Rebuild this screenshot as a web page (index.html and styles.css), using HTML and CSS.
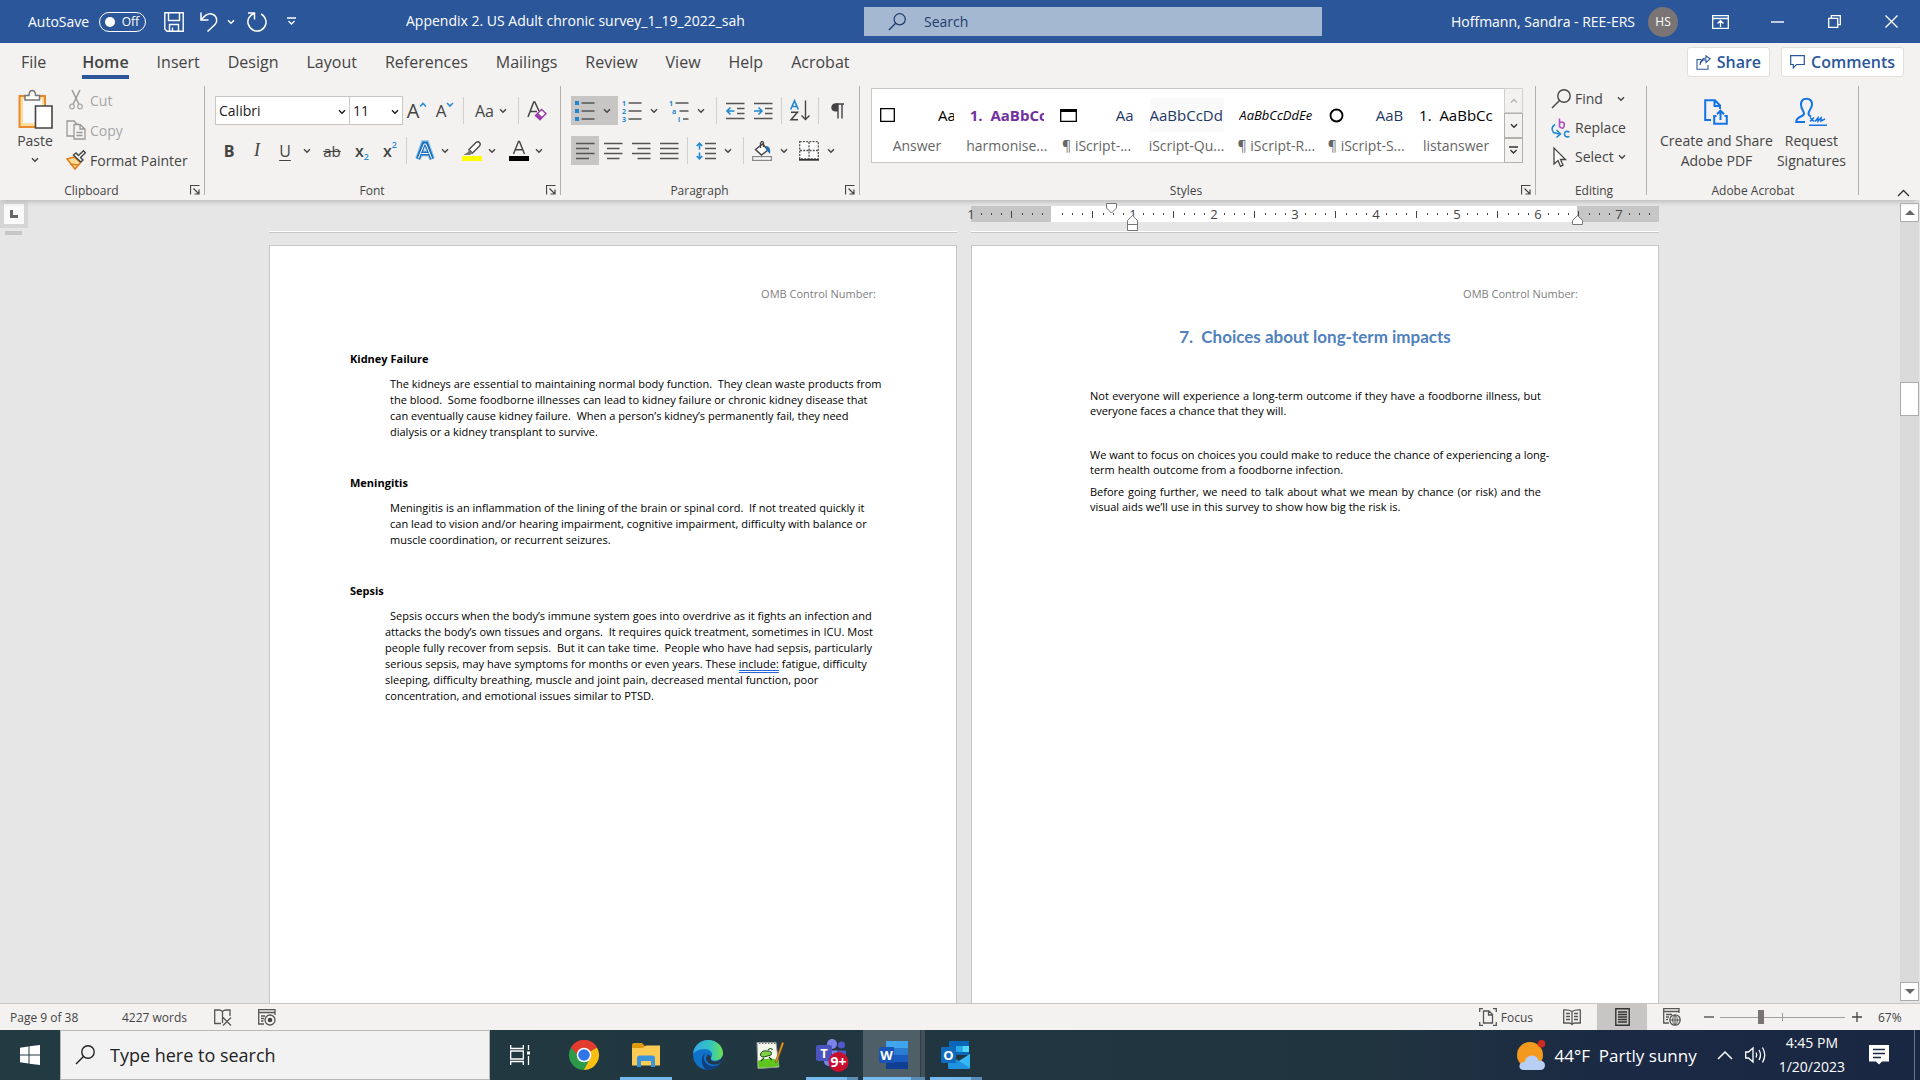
FILE: index.html
```html
<!DOCTYPE html>
<html lang="en">
<head>
    <meta charset="UTF-8">
    <meta name="viewport" content="width=device-width, initial-scale=1.0">
    <title>Appendix 2. US Adult chronic survey_1_19_2022_sah</title>
    <link rel="stylesheet" href="styles.css">
</head>
<body>
    <!-- Shared icon shapes -->
    <svg class="defs" aria-hidden="true">
        <symbol id="chev" viewBox="0 0 8 6"><path d="M1 1.2 4 4.3 7 1.2" fill="none" stroke="currentColor" stroke-width="1.4"/></symbol>
        <symbol id="launch" viewBox="0 0 10 10"><path d="M.5 9.500V.5H9.500M3.500 3.500 8.500 8.500M9 4.500V9H4.500" fill="none" stroke="currentColor" stroke-width="1.2"/></symbol>
        <symbol id="lens" viewBox="0 0 20 20"><circle cx="13" cy="7" r="6.200" fill="none" stroke="currentColor" stroke-width="1.4"/><path d="M8.500 11.500 1 19" stroke="currentColor" stroke-width="1.5"/></symbol>
    </svg>

    <header class="titlebar">
        <div class="quick">
            <span>AutoSave</span>
            <button class="toggle" aria-label="AutoSave"><i></i>Off</button>
            <button class="qbtn save" aria-label="Save"><svg width="20" height="20" viewBox="0 0 20 20"><path d="M.8.8H19.200V19.200H3L.8 17ZM4.500 1V8.500H15.500V1M5.500 19V12.500H14.500V19M8.500 19V15.500" fill="none" stroke="#fff" stroke-width="1.4"/></svg></button>
            <button class="qbtn undo" aria-label="Undo"><svg width="18" height="20" viewBox="0 0 18 20"><path d="M1 .5V8H8.500M1.300 7.700C5 3 9 .8 12.500 2.200 17 4 18 9 15 12.500L7.500 19.500" fill="none" stroke="#fff" stroke-width="1.5"/></svg></button>
            <svg class="chev"><use href="#chev"/></svg>
            <button class="qbtn redo" aria-label="Redo"><svg width="20" height="20" viewBox="0 0 20 20"><path d="M1 1H7.500V7.500M7 1.500C2 3.500 0 8 1.200 12 3 18 9 20.500 14 18.200 19 15.500 20.500 9.500 17.500 5.200 16.500 3.700 15.500 2.700 14 2" fill="none" stroke="#fff" stroke-width="1.5"/></svg></button>
            <button class="qbtn" aria-label="Customize"><svg width="9" height="9" viewBox="0 0 9 9"><path d="M0 1H9M1.500 4 4.500 7 7.500 4" fill="none" stroke="#fff" stroke-width="1.3"/></svg></button>
        </div>
        <div class="doc-title">Appendix 2. US Adult chronic survey_1_19_2022_sah</div>
        <label class="search">
            <svg width="18" height="18"><use href="#lens"/></svg>
            <input type="text" placeholder="Search" aria-label="Search">
        </label>
        <div class="account">
            <span>Hoffmann, Sandra - REE-ERS</span>
            <span class="avatar">HS</span>
        </div>
        <div class="window-buttons">
            <button aria-label="Ribbon display options"><svg width="17" height="14" viewBox="0 0 17 14"><path d="M.7.700H16.300V13.300H.7ZM.7 3.500H16.300M8.500 12V6M5.500 8.500 8.500 5.700 11.500 8.500" fill="none" stroke="#fff" stroke-width="1.3"/></svg></button>
            <button aria-label="Minimize"><svg width="13" height="13"><path d="M0 7H13" stroke="#fff" stroke-width="1.4"/></svg></button>
            <button aria-label="Restore"><svg width="13" height="13"><path d="M.7 3.300H9.700V12.300H.7ZM3.300 3V.7H12.300V9.700H10" fill="none" stroke="#fff" stroke-width="1.3"/></svg></button>
            <button aria-label="Close"><svg width="13" height="13"><path d="M.5.500 12.500 12.500M12.500.500.5 12.500" stroke="#fff" stroke-width="1.400"/></svg></button>
        </div>
    </header>

    <nav class="tabs">
        <a href="#">File</a>
        <a href="#" class="active">Home</a>
        <a href="#">Insert</a>
        <a href="#">Design</a>
        <a href="#">Layout</a>
        <a href="#">References</a>
        <a href="#">Mailings</a>
        <a href="#">Review</a>
        <a href="#">View</a>
        <a href="#">Help</a>
        <a href="#">Acrobat</a>
        <div class="tab-actions">
            <button><svg width="15" height="15" viewBox="0 0 15 15"><path d="M5 4.500H1V14.300H12V10M4 10C4.500 6.500 6.500 4.700 10 4.700V7.500L14.200 3.800 10 .8V3C7 3 4.500 5 4 10Z" fill="none" stroke="currentColor" stroke-width="1.1"/></svg>Share</button>
            <button><svg width="15" height="14" viewBox="0 0 15 14"><path d="M.7.700H14.300V9.500H6.500L3.300 12.800V9.500H.7Z" fill="none" stroke="currentColor" stroke-width="1.2"/></svg>Comments</button>
        </div>
    </nav>

    <section class="ribbon">
        <div class="group clipboard">
            <div class="clip-body">
                <button class="paste">
                    <svg width="36" height="40" viewBox="0 0 36 40"><path d="M2.500 7H28V38H2.500Z" fill="#fbdc9a" stroke="#e8892b" stroke-width="2"/><path d="M6 10H25V34H6Z" fill="#fafafa"/><path d="M8 11V6.500H12C12 3 13 1.500 15.200 1.500S18.500 3 18.500 6.500H22.500V11Z" fill="#fff" stroke="#777" stroke-width="1.500"/><path d="M18.500 17H35V39H18.500Z" fill="#fff" stroke="#444" stroke-width="1.600"/></svg>
                    <span>Paste</span>
                    <svg class="chev"><use href="#chev"/></svg>
                </button>
                <div class="clip-list">
                    <button class="off"><svg width="20" height="20" viewBox="0 0 20 20"><path d="M6 0 12.800 14M14 0 7.200 14" fill="none" stroke="#999" stroke-width="1.500"/><circle cx="6" cy="16.500" r="2.300" fill="none" stroke="#aaa" stroke-width="1.300"/><circle cx="14" cy="16.500" r="2.300" fill="none" stroke="#aaa" stroke-width="1.300"/></svg>Cut</button>
                    <button class="off"><svg width="20" height="20" viewBox="0 0 20 20"><path d="M8 16H1V1H8L11 4M8 4.500H14L19 9V19H8ZM14 4.500V9H19M10.500 12.500H16.500M10.500 15.500H16.500" fill="none" stroke="#999" stroke-width="1.300"/></svg>Copy</button>
                    <button><svg width="20" height="20" viewBox="0 0 20 20"><path d="M1 9 8 7 14.500 12.500 9 19Z" fill="#fbdc9a" stroke="#e07b1a" stroke-width="1.500"/><path d="M4 14 12 15" stroke="#e07b1a" stroke-width="1.500"/><path d="M7.500 5 10 3 12.500 5.500 17.500.800 19.300 2.800 14.500 7.500 17 10 14.800 12Z" fill="#fff" stroke="#444" stroke-width="1.400"/></svg>Format Painter</button>
                </div>
            </div>
            <div class="group-label">Clipboard</div>
            <button class="launcher" aria-label="Clipboard settings"><svg><use href="#launch"/></svg></button>
        </div>

        <div class="group font">
            <div class="tools">
                <span class="combo name"><select aria-label="Font"><option>Calibri</option></select><svg class="chev"><use href="#chev"/></svg></span>
                <span class="combo size"><select aria-label="Font size"><option>11</option></select><svg class="chev"><use href="#chev"/></svg></span>
                <button class="tool grow" aria-label="Grow font">A<svg class="chev"><path d="M1 4.500 4 1.500 7 4.500" fill="none" stroke="#2a8dd4" stroke-width="1.600"/></svg></button>
                <button class="tool shrink" aria-label="Shrink font">A<svg class="chev"><path d="M1 1 4 4 7 1" fill="none" stroke="#2a8dd4" stroke-width="1.600"/></svg></button>
                <span class="sep"></span>
                <button class="tool case">Aa<svg class="chev"><use href="#chev"/></svg></button>
                <span class="sep"></span>
                <button class="tool" aria-label="Clear formatting"><svg width="20" height="20" viewBox="0 0 20 20"><path d="M1 16 6.700 1H7.800L12 10M3 10.500H10" fill="none" stroke="#444" stroke-width="1.500"/><path d="M8.500 14.500 14.500 8.500 19 12.500 13 18.800Z" fill="#fff" stroke="#9b3fa8" stroke-width="1.500"/><path d="M8.500 14.500 11 12 15.500 16.200 13 18.800Z" fill="#9b3fa8"/></svg></button>
            </div>
            <div class="tools">
                <button class="tool bold">B</button>
                <button class="tool italic">I</button>
                <button class="tool split"><span class="under">U</span><svg class="chev"><use href="#chev"/></svg></button>
                <button class="tool strike">ab</button>
                <button class="tool script">x<sub>2</sub></button>
                <button class="tool script">x<sup>2</sup></button>
                <span class="sep"></span>
                <button class="tool split" aria-label="Text effects"><svg width="20" height="20" viewBox="0 0 20 20"><path d="M3 18 8.500 2H11.500L17 18M6.500 12.500H13.500" fill="none" stroke="#9ccbee" stroke-width="6"/><path d="M3 18 8.700 2.500H11.300L17 18M6.500 12.500H13.500" fill="none" stroke="#1f6fbd" stroke-width="4"/><path d="M3.300 17.500 9.200 3H10.800L16.700 17.500M6.500 12.500H13.500" fill="none" stroke="#fff" stroke-width="1"/></svg><svg class="chev"><use href="#chev"/></svg></button>
                <button class="tool split" aria-label="Highlight"><svg width="20" height="20" viewBox="0 0 20 20"><path d="M7 8.500 14 1.500Q16 0 17.500 1.500T17.500 5L10.500 12Z" fill="#fff" stroke="#444" stroke-width="1.300"/><path d="M7 8 11 12 8 14H1.500L6 11Z" fill="#777"/><path d="M0 15H20V20H0Z" fill="#ff0"/></svg><svg class="chev"><use href="#chev"/></svg></button>
                <button class="tool split" aria-label="Font color"><svg width="20" height="20" viewBox="0 0 20 20"><path d="M4.500 13 9.500.500H10.500L15.500 13M6.500 8.800H13.500" fill="none" stroke="#444" stroke-width="1.400"/><path d="M0 15H20V20H0Z"/></svg><svg class="chev"><use href="#chev"/></svg></button>
            </div>
            <div class="group-label">Font</div>
            <button class="launcher" aria-label="Font settings"><svg><use href="#launch"/></svg></button>
        </div>

        <div class="group paragraph">
            <div class="tools">
                <button class="tool split on" aria-label="Bullets"><svg width="20" height="20" viewBox="0 0 20 20"><path d="M0 0H4V4H0ZM0 8H4V12H0ZM0 16H4V20H0Z" fill="#1e88d2"/><path d="M6.500 2H19.500M6.500 10H19.500M6.500 18H19.500" stroke="#555" stroke-width="1.500"/></svg><svg class="chev"><use href="#chev"/></svg></button>
                <button class="tool split" aria-label="Numbering"><svg width="20" height="20" viewBox="0 0 20 20"><g class="num"><text x="0" y="5">1</text><text x="0" y="13">2</text><text x="0" y="21">3</text></g><path d="M6.500 2H19.500M6.500 10H19.500M6.500 18H19.500" stroke="#555" stroke-width="1.500"/></svg><svg class="chev"><use href="#chev"/></svg></button>
                <button class="tool split" aria-label="Multilevel list"><svg width="20" height="20" viewBox="0 0 20 20"><g class="num"><text x="0" y="5">1</text><text x="3" y="13">a</text><text x="9" y="21">i</text></g><path d="M6.500 2H19.500M10.500 10H19.500M14 18H19.500" stroke="#555" stroke-width="1.500"/></svg><svg class="chev"><use href="#chev"/></svg></button>
                <span class="sep"></span>
                <button class="tool" aria-label="Decrease indent"><svg width="19" height="18" viewBox="0 0 19 18"><path d="M0 1.500H18.500M11 6.500H18.500M11 11.500H18.500M0 16.500H18.500" stroke="#555" stroke-width="1.500"/><path d="M8.500 9H1.500M4.500 5.500 1 9 4.500 12.500" fill="none" stroke="#1e88d2" stroke-width="1.600"/></svg></button>
                <button class="tool" aria-label="Increase indent"><svg width="19" height="18" viewBox="0 0 19 18"><path d="M0 1.500H18.500M11 6.500H18.500M11 11.500H18.500M0 16.500H18.500" stroke="#555" stroke-width="1.500"/><path d="M0 9H7.500M4.500 5.500 8 9 4.500 12.500" fill="none" stroke="#1e88d2" stroke-width="1.600"/></svg></button>
                <span class="sep"></span>
                <button class="tool" aria-label="Sort"><svg width="20" height="21" viewBox="0 0 20 21"><path d="M.7 9.500 4.500.700 8.300 9.500M2 6.500H7" fill="none" stroke="#1e88d2" stroke-width="1.600"/><path d="M1 12.200H7.500L1 19.800H8" fill="none" stroke="#444" stroke-width="1.500"/><path d="M15.500.500V19.500M11.500 15.500 15.500 19.500 19.500 15.500" fill="none" stroke="#444" stroke-width="1.400"/></svg></button>
                <span class="sep"></span>
                <button class="tool" aria-label="Show marks"><svg width="13" height="16" viewBox="0 0 13 16"><path d="M13 1H5M7 15.500V1M11 15.500V1" fill="none" stroke="#444" stroke-width="1.400"/><path d="M7 .3H5Q.3.500.3 4.500T5 8.500H7Z" fill="#444"/></svg></button>
            </div>
            <div class="tools">
                <button class="tool on" aria-label="Align left"><svg width="19" height="18"><path d="M0 1.500H18.500M0 6.500H13M0 11.500H18.500M0 16.500H13" stroke="#555" stroke-width="1.500"/></svg></button>
                <button class="tool" aria-label="Center"><svg width="19" height="18"><path d="M0 1.500H18.500M3 6.500H15.500M0 11.500H18.500M3 16.500H15.500" stroke="#555" stroke-width="1.500"/></svg></button>
                <button class="tool" aria-label="Align right"><svg width="19" height="18"><path d="M0 1.500H18.500M5.500 6.500H18.500M0 11.500H18.500M5.500 16.500H18.500" stroke="#555" stroke-width="1.500"/></svg></button>
                <button class="tool" aria-label="Justify"><svg width="19" height="18"><path d="M0 1.500H18.500M0 6.500H18.500M0 11.500H18.500M0 16.500H18.500" stroke="#555" stroke-width="1.500"/></svg></button>
                <span class="sep"></span>
                <button class="tool split" aria-label="Line spacing"><svg width="20" height="18" viewBox="0 0 20 18"><path d="M9 1.500H20M9 6.500H20M9 11.500H20M9 16.500H20" stroke="#555" stroke-width="1.500"/><path d="M3.500 1V7.500M3.500 10.500V17M.7 4 3.500 1.200 6.300 4M.7 14 3.500 16.800 6.300 14" fill="none" stroke="#1e88d2" stroke-width="1.600"/></svg><svg class="chev"><use href="#chev"/></svg></button>
                <span class="sep"></span>
                <button class="tool split" aria-label="Shading"><svg width="20" height="20" viewBox="0 0 20 20"><path d="M3.500 8.500 10.500 3 16 9 9.500 14Z" fill="#fff" stroke="#444" stroke-width="1.500"/><path d="M8.500 7V2Q10.500-1 11.500 2V6" fill="none" stroke="#444" stroke-width="1.300"/><path d="M14 5Q19 5 18 13L14.500 9Z" fill="#1e6fb8"/><path d="M.7 15.700H19.300V19.300H.7Z" fill="#fff" stroke="#888" stroke-width="1.200"/></svg><svg class="chev"><use href="#chev"/></svg></button>
                <button class="tool split" aria-label="Borders"><svg width="20" height="20" viewBox="0 0 20 20"><path d="M.7.700H19.300V18H.7ZM10 1V18M1 9.500H19" fill="#fff" stroke="#555" stroke-width="1.300" stroke-dasharray="2 1.200"/><path d="M0 18.800H20" stroke="#333" stroke-width="1.800"/></svg><svg class="chev"><use href="#chev"/></svg></button>
            </div>
            <div class="group-label">Paragraph</div>
            <button class="launcher" aria-label="Paragraph settings"><svg><use href="#launch"/></svg></button>
        </div>

        <div class="group styles">
            <div class="gallery">
                <button class="style answer"><span class="sample"><svg width="15" height="14"><path d="M.7.700H14.300V13.300H.7Z" fill="#fff" stroke="#000" stroke-width="1.300"/></svg><b>Aa</b></span><span>Answer</span></button>
                <button class="style harm"><span class="sample">1.&nbsp; AaBbCc</span><span>harmonise...</span></button>
                <button class="style"><span class="sample"><svg width="17" height="13"><path d="M.7.700H16.300V12.300H.7Z" fill="#fff" stroke="#000" stroke-width="1.300"/><path d="M0 0H17V3H0Z"/></svg><b>Aa</b></span><span>¶ iScript-...</span></button>
                <button class="style"><span class="sample quest">AaBbCcDd</span><span>iScript-Qu...</span></button>
                <button class="style"><span class="sample resp">AaBbCcDdEe</span><span>¶ iScript-R...</span></button>
                <button class="style"><span class="sample"><svg width="15" height="15"><circle cx="7.500" cy="7.500" r="6" fill="#fff" stroke="#000" stroke-width="1.800"/></svg><b>AaB</b></span><span>¶ iScript-S...</span></button>
                <button class="style answer"><span class="sample">1.&nbsp; AaBbCc</span><span>listanswer</span></button>
                <div class="gallery-nav">
                    <button class="off" aria-label="Up"><svg class="chev"><path d="M1 4.500 4 1.500 7 4.500" fill="none" stroke="currentColor" stroke-width="1.300"/></svg></button>
                    <button aria-label="Down"><svg class="chev"><use href="#chev"/></svg></button>
                    <button aria-label="More"><svg width="9" height="9"><path d="M0 1H9M1.500 4 4.500 7 7.500 4" fill="none" stroke="#333" stroke-width="1.400"/></svg></button>
                </div>
            </div>
            <div class="group-label">Styles</div>
            <button class="launcher" aria-label="Styles settings"><svg><use href="#launch"/></svg></button>
        </div>

        <div class="group editing">
            <div class="edit-list">
                <button><svg width="20" height="20"><use href="#lens"/></svg>Find<svg class="chev far"><use href="#chev"/></svg></button>
                <button><svg width="20" height="20" viewBox="0 0 20 20"><g fill="none" stroke-width="1.600"><path d="M8.500.500V9.500M8.500 5Q10 3.500 12 4.300T13 8.500 8.500 8.500" stroke="#b24fc0"/><path d="M18.500 14Q13.500 12 13.500 16T18.500 18.500" stroke="#1e88d2"/><path d="M4 6.500Q-1 10 2.500 14.500L8 16M5.500 12 9.500 16 5.500 19.500" stroke="#1e88d2"/></g></svg>Replace</button>
                <button><svg width="20" height="20" viewBox="0 0 20 20"><path d="M3 1V17L7 13.500 9.500 19.300 12 18.200 9.500 12.500H14.500Z" fill="#fff" stroke="#444" stroke-width="1.300"/></svg>Select<svg class="chev"><use href="#chev"/></svg></button>
            </div>
            <div class="group-label">Editing</div>
        </div>

        <div class="group acrobat">
            <div class="acro-list">
                <button><svg width="24" height="26" viewBox="0 0 24 26"><path d="M7 21H1.200V1.200H11L16 6.500V10M10.500 1.500V7H16M12.500 17H10.200V24.800H22.800V17H20.500M16.500 21V12M13 15.200 16.500 11.700 20 15.200" fill="none" stroke="#1473e6" stroke-width="2"/></svg><span>Create and Share<br>Adobe PDF</span></button>
                <button><svg width="32" height="29" viewBox="0 0 32 29"><path d="M10 24.500H1.200C1.200 18 9 20 9 16 9 13.500 6 12 6 7 6 3 8.500 1.200 11.500 1.200S17 3 17 7C17 11 13.500 12.500 13.500 16.500 13.500 18 15 18.500 16 19" fill="none" stroke="#1473e6" stroke-width="2"/><path d="M15 20 19 24M19 20 15 24M20 24 23 20.500V23.500L26 20.500V23.500L30 21.500M14 27.800H32" fill="none" stroke="#1473e6" stroke-width="1.600"/></svg><span>Request<br>Signatures</span></button>
            </div>
            <div class="group-label">Adobe Acrobat</div>
        </div>
        <button class="collapse" aria-label="Collapse ribbon"><svg width="13" height="8"><path d="M1 7 6.500 1.500 12 7" fill="none" stroke="#333" stroke-width="1.400"/></svg></button>
    </section>

    <main class="workspace">
        <div class="side">
            <button class="tab-stop" aria-label="Tab stop"><svg width="8" height="8"><path d="M1.500 0V6.500H8" fill="none" stroke="#666" stroke-width="3"/></svg></button>
            <div class="side-mark"></div>
        </div>
        <div class="pages">
            <svg class="ruler" width="688" height="16">
                <defs><pattern id="ticks" width="81" height="16" patternUnits="userSpaceOnUse"><path d="M10 8h1M20 8h1M30 8h1M51 8h1M61 8h1M71 8h1" stroke="#444" stroke-width="2"/><path d="M40.500 5V12" stroke="#444"/></pattern></defs>
                <rect width="688" height="16" fill="#c6c6c6"/>
                <rect x="80" width="526" height="16" fill="#fff"/>
                <rect width="688" height="16" fill="url(#ticks)"/>
                <g class="inches"><text x="0" y="13">1</text><text x="162" y="13">1</text><text x="243" y="13">2</text><text x="324" y="13">3</text><text x="405" y="13">4</text><text x="486" y="13">5</text><text x="567" y="13">6</text><text x="648" y="13">7</text></g>
                <g fill="#fff" stroke="#777"><path d="M135.500-2.500H145.500V2L140.500 7 135.500 2ZM156.500 14.500 161.500 9.500 166.500 14.500V24.500H156.500ZM156.500 18.500H166.500M601.500 18.500V14.500L606.500 9.500 611.500 14.500V18.500Z"/></g>
            </svg>
            <div class="prev-page"></div>
            <div class="prev-page"></div>

            <article class="page">
                <div class="page-header">OMB Control Number:</div>
                <h3>Kidney Failure</h3>
                <p>The kidneys are essential to maintaining normal body function.&nbsp; They clean waste products from<br>the blood.&nbsp; Some foodborne illnesses can lead to kidney failure or chronic kidney disease that<br>can eventually cause kidney failure.&nbsp; When a person’s kidney’s permanently fail, they need<br>dialysis or a kidney transplant to survive.</p>
                <h3>Meningitis</h3>
                <p>Meningitis is an inflammation of the lining of the brain or spinal cord.&nbsp; If not treated quickly it<br>can lead to vision and/or hearing impairment, cognitive impairment, difficulty with balance or<br>muscle coordination, or recurrent seizures.</p>
                <h3>Sepsis</h3>
                <p class="sepsis">Sepsis occurs when the body’s immune system goes into overdrive as it fights an infection and<br>attacks the body’s own tissues and organs.&nbsp; It requires quick treatment, sometimes in ICU. Most<br>people fully recover from sepsis.&nbsp; But it can take time.&nbsp; People who have had sepsis, particularly<br>serious sepsis, may have symptoms for months or even years. These <span class="grammar">include:</span> fatigue, difficulty<br>sleeping, difficulty breathing, muscle and joint pain, decreased mental function, poor<br>concentration, and emotional issues similar to PTSD.</p>
            </article>

            <article class="page choices">
                <div class="page-header">OMB Control Number:</div>
                <h2>7.&nbsp; Choices about long-term impacts</h2>
                <p>Not everyone will experience a long-term outcome if they have a foodborne illness, but everyone faces a chance that they will.</p>
                <p class="focus-text">We want to focus on choices you could make to reduce the chance of experiencing a long-<br>term health outcome from a foodborne infection.</p>
                <p>Before going further, we need to talk about what we mean by chance (or risk) and the visual&nbsp;aids we’ll use in this survey to show how big the risk is.</p>
            </article>
        </div>
        <div class="scrollbar">
            <button aria-label="Scroll up"><svg width="10" height="5"><path d="M0 5 5 0 10 5Z" fill="#666"/></svg></button>
            <div class="track"><div class="thumb"></div></div>
            <button aria-label="Scroll down"><svg width="10" height="5"><path d="M0 0H10L5 5Z" fill="#666"/></svg></button>
        </div>
    </main>

    <footer class="status">
        <span class="page-no">Page 9 of 38</span>
        <span class="words">4227 words</span>
        <svg class="proof" width="18" height="17" viewBox="0 0 18 17"><path d="M8.500 2.500V14M8.500 2.500Q7 1 5 1H.7V14.500H7M8.500 2.500Q10 1 12 1H16V7M9 8.500 17 16.500M17 8.500 9 16.500" fill="none" stroke="#555" stroke-width="1.300"/></svg>
        <svg width="18" height="17" viewBox="0 0 18 17"><path d="M6 15H.7V.700H17V6M.7 3.500H17M3 7H7M3 9.500H6M3 12H5.500" fill="none" stroke="#555" stroke-width="1.300"/><circle cx="12" cy="11" r="5" fill="none" stroke="#555" stroke-width="1.300"/><circle cx="12" cy="11" r="2.300" fill="#444"/></svg>
        <div class="views">
            <button class="focus"><svg width="18" height="18" viewBox="0 0 18 18"><path d="M.7 4V.700H4M14 .7H17.300V4M17.300 14V17.300H14M4 17.300H.7V14M4.500 3H10L13.500 6.500V15H4.500ZM9.500 3V7H13.500" fill="none" stroke="#555" stroke-width="1.300"/></svg>Focus</button>
            <button class="view" aria-label="Read mode"><svg width="18" height="17" viewBox="0 0 18 17"><path d="M9 2.500Q6 .7.700 1V14H6Q8 14 9 15.500 10 14 12 14H17.300V1Q12 .7 9 2.500ZM9 2.500V16M3 4.500H7M3 7.500H7M3 10.500H7M11 4.500H15M11 7.500H15M11 10.500H15" fill="none" stroke="#555" stroke-width="1.300"/></svg></button>
            <button class="view on" aria-label="Print layout"><svg width="15" height="18" viewBox="0 0 15 18"><path d="M.8.800H14.200V17.200H.8ZM3 4H12M3 6.500H12M3 9H12M3 11.500H12M3 14H12" fill="none" stroke="#333" stroke-width="1.400"/></svg></button>
            <button class="view" aria-label="Web layout"><svg width="18" height="18" viewBox="0 0 18 18"><path d="M6 15H.7V.700H16V5M.7 3.500H16M3 6.500H9M3 9H6M3 11.500H5" fill="none" stroke="#555" stroke-width="1.300"/><circle cx="12" cy="12" r="5.200" fill="none" stroke="#555" stroke-width="1.300"/><path d="M7 12H17M12 7V17M12 7Q7 12 12 17M12 7Q17 12 12 17" fill="none" stroke="#555"/></svg></button>
            <button class="zoom-btn" aria-label="Zoom out"><svg width="10" height="10"><path d="M0 5H10" stroke="#444" stroke-width="1.300"/></svg></button>
            <input type="range" min="0" max="100" value="32" aria-label="Zoom">
            <button class="zoom-btn" aria-label="Zoom in"><svg width="10" height="10"><path d="M0 5H10M5 0V10" stroke="#444" stroke-width="1.300"/></svg></button>
            <span class="percent">67%</span>
        </div>
    </footer>

    <div class="taskbar">
        <button class="start" aria-label="Start"><svg width="20" height="20" viewBox="0 0 20 20"><path d="M0 2.800 8.500 1.500V9.500H0ZM9.500 1.300 20 0V9.500H9.500ZM0 10.500H8.500V18.500L0 17.200ZM9.500 10.500H20V20L9.500 18.700Z" fill="#fff"/></svg></button>
        <label class="task-search">
            <svg width="20" height="20"><use href="#lens"/></svg>
            <input type="text" placeholder="Type here to search" aria-label="Type here to search">
        </label>
        <button class="start" aria-label="Task view"><svg width="20" height="20" viewBox="0 0 20 20"><path d="M.7 0V3.500H13.300V0M.7 6H13.300V14H.7ZM.7 20V16.500H13.300V20M18.500 0V5M18.500 11V20" fill="none" stroke="#fff" stroke-width="1.300"/><path d="M17 6.500H20V9.500H17Z" fill="#fff"/></svg></button>
        <div class="apps">
            <button aria-label="Chrome"><svg width="30" height="30" viewBox="0 0 30 30"><path d="M15 15 2 7.500A15 15 0 0 1 28 7.500Z" fill="#e33b2e"/><path d="M15 15 28 7.500A15 15 0 0 1 15 30Z" fill="#fbbf12"/><path d="M2 7.500 15 15 21 18.500 15 30A15 15 0 0 1 2 7.500Z" fill="#2c9a48"/><path d="M15 8H28.300A15 15 0 0 0 2 7.500L8.500 15Z" fill="#e33b2e"/><circle cx="15" cy="15" r="7.300" fill="#fff"/><circle cx="15" cy="15" r="5.800" fill="#2f76e8"/></svg></button>
            <button class="running" aria-label="File Explorer"><svg width="28" height="24" viewBox="0 0 28 24"><path d="M0 2Q0 0 2 0H10L13 3H27V8H0Z" fill="#dd9a0c"/><path d="M0 5H11L14 2.500H28V22.500H0Z" fill="#fccb54"/><path d="M5 24V15Q5 12.500 7.500 12.500H20.500Q23 12.500 23 15V24H19V18H9V24Z" fill="#3a95dc"/></svg></button>
            <button aria-label="Edge"><svg width="30" height="30" viewBox="0 0 30 30"><defs><linearGradient id="e1" x1="0" x2="1"><stop offset="0" stop-color="#32a9e8"/><stop offset=".6" stop-color="#34c6bd"/><stop offset="1" stop-color="#6fe04c"/></linearGradient></defs><circle cx="15" cy="15" r="15" fill="#0f72c9"/><path d="M12 13C9 20 13 26 20 26 24 26 27 24 28.500 22 26 27 21 30 15.500 30 8 29 7 17 12 13Z" fill="#123f7e"/><path d="M30 14C29 21 22 23 18.500 20.500 17 19 17.800 18 18.500 17L15 14 13 18C13 24 22 27 28.500 22L31 24V14Z" fill="#22384a"/><path d="M0 14C1 5 8 0 15 0 24 0 30 6.500 30 13 30 18 26 20.500 21.500 20.500 18 20.500 17.500 18.500 18.500 17 20.500 13 17 9 12 9 6 9 1 12 0 14Z" fill="url(#e1)"/></svg></button>
            <button aria-label="Notepad++"><svg width="28" height="28" viewBox="0 0 28 28"><path d="M1 1.500H20L23 26 2 27.500Z" fill="#f4f6ee" stroke="#999"/><path d="M2 20Q10 16 22.300 19L22.700 25.500 2.500 27Z" fill="#5fc51f"/><path d="M4.500 13Q6 9 11 10 17 10 15 14L8 16Q4 16 4.500 13" fill="#7fd04a" stroke="#1f4a16"/><path d="M8 17 5 20M13 16 16 19M12 9Q15 6 16.500 9" fill="none" stroke="#1f4a16" stroke-width="1.200"/><path d="M3 2.500H20" stroke="#777" stroke-dasharray="1.500 1.500"/><path d="M26 1 28 2 21 21 19.500 22 19.500 20Z" fill="#e49a24" stroke="#7a4a10" stroke-width=".6"/></svg></button>
            <button class="running multi" aria-label="Teams"><svg width="32" height="32" viewBox="0 0 32 32"><circle cx="16" cy="5" r="5" fill="#7b83eb"/><circle cx="25.500" cy="6" r="3.500" fill="#5059c9"/><path d="M20 11.500H30V20H20Z" fill="#5059c9"/><path d="M8 11.500H21V22Q20 27 14 27T8 22Z" fill="#7b83eb"/><rect y="6" width="16" height="16" rx="2" fill="#4b53bc"/><text class="logo" x="8" y="18.500">T</text><circle cx="22.500" cy="23" r="10" fill="#c8102e"/><text class="logo badge" x="22.500" y="28">9+</text></svg></button>
            <button class="running multi current" aria-label="Word"><svg width="30" height="28" viewBox="0 0 30 28"><path d="M7 0H29V7H7Z" fill="#41a5ee"/><path d="M7 7H29V14H7Z" fill="#2b7cd3"/><path d="M7 14H29V21H7Z" fill="#185abd"/><path d="M7 21H29V28H7Z" fill="#103f91"/><rect y="6" width="15" height="16" rx="1" fill="#1a55b5"/><text class="logo" x="7.500" y="18.500">W</text></svg></button>
            <button class="running multi" aria-label="Outlook"><svg width="30" height="28" viewBox="0 0 30 28"><path d="M8 0H28V14H8Z" fill="#0a66b8"/><path d="M15 5H21.500V11H15Z" fill="#28a8ea"/><path d="M21.500 5H28V11H21.500Z" fill="#50d9ff"/><path d="M7 13 18 20 29 13V27Q29 28 28 28H8Q7 28 7 27Z" fill="#1f93e0"/><path d="M29 13V27L18 20Z" fill="#35b8f1"/><rect y="6" width="15" height="16" rx="1" fill="#0f6cbd"/><text class="logo" x="7.500" y="18.500">O</text></svg></button>
        </div>
        <div class="tray">
            <svg width="30" height="30" viewBox="0 0 30 30"><circle cx="13" cy="15" r="13" fill="#f39a1e"/><circle cx="24.500" cy="3.800" r="3.800" fill="#cf2a1f"/><path d="M7 30Q2 30 2.500 25.500 3 22 7.500 22 9 15.500 15 15.500 20 15.500 21.500 20.500 28 20.500 28 25.500 27.500 30 23 30Z" fill="#b7cff5"/></svg>
            <span class="weather">44°F&nbsp; Partly sunny</span>
            <svg class="up" width="16" height="10"><path d="M1 9 8 2 15 9" fill="none" stroke="#fff" stroke-width="1.500"/></svg>
            <svg class="sound" width="22" height="18" viewBox="0 0 22 18"><path d="M.7 6H3.500L8 2V16L3.500 12H.7ZM11 6.500Q12.500 9 11 11.500M14 4Q17 9 14 14M17.500 1.500Q22 9 17.500 16.500" fill="none" stroke="#fff" stroke-width="1.300"/></svg>
            <div class="clock">4:45 PM<br>1/20/2023</div>
            <svg class="notes" width="20" height="20" viewBox="0 0 20 20"><path d="M0 0H20V16.500H13L10 19.500 7 16.500H0Z" fill="#fff"/><path d="M4 4.500H16M4 8.500H16M4 12.500H12" stroke="#1b2942" stroke-width="1.300"/></svg>
        </div>
    </div>
</body>
</html>
```

FILE: styles.css
```css
* {
    box-sizing: border-box;
}
body {
    margin: 0;
    height: 100vh;
    display: flex;
    flex-direction: column;
    overflow: hidden;
    font-family: "Open Sans", "Noto Sans", sans-serif;
    font-size: 14px;
    color: #444;
    background-color: #e6e6e6;
}
button, input, select {
    font: inherit;
    color: inherit;
    background: none;
    border: 0;
    padding: 0;
    margin: 0;
}
svg {
    flex: none;
    overflow: visible;
}
.defs {
    display: none;
}
.chev {
    width: 8px;
    height: 6px;
}

/* Title bar */
.titlebar {
    display: flex;
    align-items: center;
    height: 43px;
    flex: none;
    background-color: #2b579a;
    color: #fff;
}
.quick {
    display: flex;
    align-items: center;
    width: 378px;
    padding-left: 28px;
}
.toggle {
    display: flex;
    align-items: center;
    justify-content: space-between;
    width: 47px;
    height: 20px;
    margin: 0 18px 0 10px;
    padding: 0 6px 0 5px;
    border: 1px solid #fff;
    border-radius: 10px;
    font-size: 12px;
}
.toggle i {
    width: 10px;
    height: 10px;
    border-radius: 50%;
    background-color: #fff;
}
.qbtn {
    display: flex;
}
.save {
    margin-right: 16px;
}
.undo {
    margin-right: 9px;
}
.redo {
    margin: 0 20px 0 12px;
}
.doc-title {
    flex: 1;
    padding: 0 0 2px 28px;
}
.search {
    display: flex;
    align-items: center;
    gap: 18px;
    width: 458px;
    height: 29px;
    padding-left: 24px;
    background-color: #a5b8d1;
    color: #1e3d6e;
}
.search input {
    flex: 1;
}
.search input::placeholder,
.task-search input::placeholder {
    color: inherit;
    opacity: 1;
}
.account {
    display: flex;
    align-items: center;
    justify-content: flex-end;
    gap: 13px;
    width: 356px;
}
.avatar {
    width: 30px;
    height: 30px;
    border-radius: 50%;
    background-color: #7a7574;
    font-size: 12px;
    line-height: 30px;
    text-align: center;
}
.window-buttons {
    display: flex;
    padding-left: 14px;
}
.window-buttons button {
    display: flex;
    align-items: center;
    justify-content: center;
    width: 57px;
    height: 43px;
}

/* Tabs */
.tabs {
    display: flex;
    flex: none;
    height: 43px;
    padding: 0 16px 0 21px;
    gap: 28px;
    background-color: #f3f2f1;
    font-size: 16px;
}
.tabs a {
    height: 36px;
    line-height: 38px;
    color: #444;
    text-decoration: none;
}
.tabs a:first-child {
    margin-right: 8px;
}
.tabs .active {
    font-weight: 600;
    border-bottom: 4px solid #2b579a;
}
.tab-actions {
    display: flex;
    gap: 11px;
    margin-left: auto;
    padding-top: 4px;
}
.tab-actions button {
    display: flex;
    align-items: center;
    gap: 6px;
    height: 30px;
    padding: 0 8px;
    border: 1px solid #e1dfdd;
    border-radius: 3px;
    background-color: #fff;
    color: #2b579a;
    font-weight: 600;
}

/* Ribbon */
.ribbon {
    display: flex;
    flex: none;
    position: relative;
    height: 114px;
    background-color: #f3f2f1;
    box-shadow: 0 5px 5px -3px #bbb;
    z-index: 1;
}
.group {
    position: relative;
    display: flex;
    flex-direction: column;
    padding: 10px 0 0 10px;
    flex: none;
}
.group::after {
    content: "";
    position: absolute;
    top: 0;
    right: 0;
    bottom: 5px;
    width: 1px;
    background-color: #b3b0ad;
}
.clipboard {
    width: 205px;
    padding: 0 0 0 10px;
}
.font {
    width: 356px;
}
.paragraph {
    width: 299px;
}
.styles {
    flex: 1;
    padding: 2px 13px 0 11px;
}
.editing {
    width: 111px;
    padding: 0 0 0 15px;
}
.acrobat {
    width: 212px;
}
.group-label {
    margin-top: auto;
    margin-left: -10px;
    padding-right: 22px;
    font-size: 12px;
    line-height: 18px;
    text-align: center;
}
.styles .group-label {
    padding-right: 12px;
}
.editing .group-label, .acrobat .group-label {
    padding-right: 0;
}
.launcher {
    position: absolute;
    right: 5px;
    bottom: 5px;
    width: 10px;
    height: 10px;
}
.launcher svg {
    display: block;
    width: 10px;
    height: 10px;
}
.clip-body {
    display: flex;
}
.paste {
    display: flex;
    flex-direction: column;
    align-items: center;
    width: 50px;
    padding-top: 3px;
    line-height: 24px;
}
.paste .chev {
    margin-top: 4px;
}
.clip-list {
    display: flex;
    flex-direction: column;
    margin-top: -1px;
    padding-left: 6px;
}
.clip-list button {
    display: flex;
    align-items: center;
    gap: 4px;
    height: 30px;
}
.off {
    color: #a6a6a6;
}
.tools {
    display: flex;
    align-items: center;
    height: 29px;
    margin-bottom: 11px;
}
.tool {
    display: flex;
    align-items: center;
    justify-content: center;
    width: 28px;
    height: 29px;
}
.split {
    width: 47px;
    justify-content: flex-start;
    padding-left: 4px;
}
.split .chev {
    margin-left: 8px;
}
.font .split svg + .chev {
    margin-left: 6px;
}
.on {
    background-color: #c8c6c4;
}
.sep {
    width: 1px;
    height: 27px;
    margin: 0 4px;
    background-color: #d2d0ce;
}
.combo {
    position: relative;
    height: 29px;
    border: 1px solid #c8c6c4;
    background-color: #fff;
    color: #222;
}
.combo select {
    appearance: none;
    width: 100%;
    height: 27px;
    padding-left: 3px;
}
.combo .chev {
    position: absolute;
    right: 3px;
    top: 12px;
}
.name {
    width: 135px;
}
.size {
    width: 54px;
    margin-left: -1px;
}
.grow {
    font-size: 20px;
}
.shrink {
    font-size: 17px;
}
.grow .chev, .shrink .chev {
    margin-bottom: 12px;
}
.case {
    width: 46px;
    gap: 5px;
    font-size: 16px;
}
.bold {
    font-size: 16px;
    font-weight: 700;
}
.italic {
    font-family: "Liberation Serif", serif;
    font-size: 18px;
    font-style: italic;
}
.under {
    width: 20px;
    font-size: 16px;
    text-align: center;
    text-decoration: underline;
    text-underline-offset: 3px;
}
.strike {
    font-size: 15px;
    text-decoration: line-through;
}
.script {
    font-size: 16px;
    font-weight: 600;
    padding-left: 4px;
}
.script sub, .script sup {
    font-size: 9px;
    color: #2a8dd4;
}
.script sub {
    padding-top: 12px;
}
.script sup {
    padding-bottom: 12px;
}
.num {
    font-size: 7px;
    font-weight: 700;
    fill: #1e88d2;
}

/* Style gallery */
.gallery {
    display: flex;
    height: 75px;
    border: 1px solid #c8c6c4;
    background-color: #fff;
}
.style {
    display: flex;
    flex-direction: column;
    align-items: center;
    flex: 1;
    min-width: 0;
    padding-top: 9px;
    color: #666;
}
.sample {
    display: flex;
    align-items: center;
    justify-content: space-between;
    width: 74px;
    height: 34px;
    margin-bottom: 4px;
    overflow: hidden;
    white-space: nowrap;
    font-size: 15px;
    color: #1f3864;
}
.sample b {
    font-weight: 400;
}
.answer .sample {
    color: #000;
}
.answer .sample b {
    margin-right: -2px;
}
.harm .sample {
    color: #7030a0;
    font-weight: 700;
}
.quest {
    background-color: #fafafa;
}
.sample.resp {
    color: #000;
    font-size: 13px;
    font-style: italic;
}
.gallery-nav {
    display: flex;
    flex-direction: column;
    width: 19px;
    margin: -1px -1px -1px 3px;
    color: #333;
}
.gallery-nav button {
    display: flex;
    align-items: center;
    justify-content: center;
    flex: 1;
    border: 1px solid #b3b0ad;
    background-color: #f3f2f1;
}
.gallery-nav .off {
    color: #b3b0ad;
    border-color: #d2d0ce;
}
.edit-list {
    margin-top: -2px;
}
.edit-list button {
    display: flex;
    align-items: center;
    gap: 4px;
    height: 29px;
}
.edit-list .far {
    margin-left: 10px;
}
.acro-list {
    display: flex;
    justify-content: center;
    gap: 4px;
    margin-left: -10px;
}
.acro-list button {
    display: flex;
    flex-direction: column;
    align-items: center;
    line-height: 20px;
}
.acro-list svg {
    height: 35px;
    padding-bottom: 3px;
}
.collapse {
    width: 61px;
    padding: 98px 10px 0 0;
    text-align: right;
    line-height: 8px;
}

/* Document area */
.workspace {
    display: flex;
    flex: 1;
    min-height: 0;
}
.side {
    width: 28px;
}
.tab-stop {
    display: flex;
    align-items: center;
    justify-content: center;
    width: 28px;
    height: 28px;
    border: 4px solid #d6d6d6;
    background-color: #fafafa;
}
.side-mark {
    width: 17px;
    height: 4px;
    margin: 3px 0 0 5px;
    background-color: #c6c6c6;
}
.pages {
    flex: 1;
    display: grid;
    grid-template-columns: 688px 688px;
    grid-template-rows: 16px 2px 1fr;
    column-gap: 14px;
    justify-content: center;
    padding-top: 6px;
}
.ruler {
    grid-column: 2;
    margin-bottom: 9px;
    position: relative;
    z-index: 2;
}
.inches {
    font-size: 13px;
    text-anchor: middle;
    fill: #444;
}
.prev-page {
    margin-top: 9px;
    height: 2px;
    border-top: 1px solid #fff;
    border-bottom: 1px solid #c6c6c6;
}
.page {
    margin-top: 21px;
    padding: 40px 80px 0;
    border: 1px solid #c6c6c6;
    border-bottom: 0;
    background-color: #fff;
    color: #000;
    font-family: "Open Sans", sans-serif;
    font-size: 11px;
    line-height: 16px;
}
.page-header {
    color: #808080;
    text-align: right;
}
.page h3 {
    margin: 0 0 9px;
    font-size: 11px;
    line-height: 16px;
}
.page-header + h3 {
    margin-top: 49px;
}
.page p {
    margin: 0 0 35px;
    padding-left: 40px;
    white-space: nowrap;
}
.page .sepsis {
    padding-left: 35px;
    text-indent: 5px;
}
.grammar {
    text-decoration: underline double #2a62d9;
    text-underline-offset: 2px;
}
.choices h2 {
    margin: 23px 0 39px;
    color: #4f81bd;
    font-family: Lato, sans-serif;
    font-size: 17px;
    line-height: 24px;
    text-align: center;
}
.page.choices p {
    margin: 0 37px 7px 38px;
    padding: 0;
    line-height: 15px;
    text-align: justify;
    white-space: normal;
}
.page.choices .focus-text {
    margin-top: 29px;
    white-space: nowrap;
}

/* Scroll bar */
.scrollbar {
    display: flex;
    flex-direction: column;
    width: 20px;
    padding: 3px 1px 2px 0;
}
.scrollbar button {
    display: flex;
    align-items: center;
    justify-content: center;
    height: 19px;
    border: 1px solid #ababab;
    background-color: #fff;
}
.track {
    flex: 1;
    background-color: #dadada;
    padding-top: 160px;
}
.thumb {
    height: 34px;
    border: 1px solid #ababab;
    background-color: #fff;
}

/* Status bar */
.status {
    display: flex;
    align-items: center;
    flex: none;
    height: 27px;
    padding-left: 10px;
    border-top: 1px solid #c6c6c6;
    background-color: #f3f2f1;
    font-size: 12px;
}
.page-no {
    width: 112px;
}
.words {
    width: 92px;
}
.proof {
    margin-right: 26px;
}
.views {
    display: flex;
    align-items: center;
    margin-left: auto;
    height: 26px;
}
.views button {
    display: flex;
    align-items: center;
    justify-content: center;
    height: 26px;
}
.focus {
    gap: 4px;
    margin-right: 14px;
}
.view {
    width: 50px;
}
.zoom-btn {
    width: 23px;
}
.views input {
    appearance: none;
    width: 125px;
    height: 20px;
    background: linear-gradient(#999, #999) 62px center / 1px 8px no-repeat;
}
.views input::-webkit-slider-runnable-track {
    height: 1px;
    background-color: #a19f9d;
}
.views input::-webkit-slider-thumb {
    appearance: none;
    width: 6px;
    height: 14px;
    margin-top: -7px;
    background-color: #7a7574;
}
.percent {
    width: 52px;
    padding-left: 10px;
}

/* Taskbar */
.taskbar {
    display: flex;
    flex: none;
    height: 50px;
    background: linear-gradient(to right, #223a42, #20343f 72%, #1b2944 84%, #1a2742);
    color: #fff;
}
.start {
    display: flex;
    align-items: center;
    justify-content: center;
    width: 60px;
}
.task-search {
    display: flex;
    align-items: center;
    gap: 15px;
    width: 430px;
    padding-left: 14px;
    border: 1px solid #b8b8b8;
    background-color: #f2f2f2;
    color: #222;
    font-size: 18px;
}
.task-search input {
    flex: 1;
}
.apps {
    display: flex;
    padding-left: 3px;
}
.apps button {
    position: relative;
    display: flex;
    align-items: center;
    justify-content: center;
    width: 62px;
}
.running::after {
    content: "";
    position: absolute;
    left: 5px;
    right: 5px;
    bottom: 0;
    height: 3px;
    background-color: #76b9ed;
}
.multi::after {
    background: linear-gradient(to right, #76b9ed 78%, #5a8db5 78%);
}
.current {
    background: linear-gradient(to right, #4e5f68 92%, #2c3c46 92%, #2c3c46 94%, #424f58 94%);
}
.current::after {
    left: 0;
    right: 0;
}
.logo {
    fill: #fff;
    font-size: 13px;
    font-weight: 700;
    text-anchor: middle;
}
.badge {
    font-size: 14px;
}
.tray {
    display: flex;
    align-items: center;
    margin-left: auto;
    margin-right: 5px;
    padding-right: 25px;
    border-right: 1px solid #6a7488;
}
.weather {
    margin: 0 20px 0 8px;
    font-size: 17px;
}
.sound {
    margin: 0 12px;
}
.clock {
    margin-right: 24px;
    font-size: 14px;
    line-height: 24px;
    text-align: center;
}
```
